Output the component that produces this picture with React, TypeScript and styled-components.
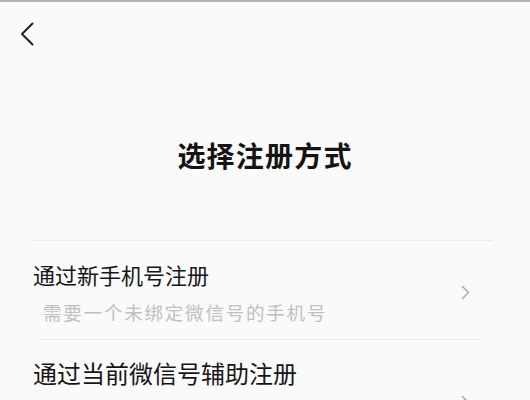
import styled, { createGlobalStyle } from "styled-components";

const GlobalStyle = createGlobalStyle`
  html, body {
    margin: 0;
    padding: 0;
    background: #fafafa;
    overflow: hidden;
  }
  body {
    font-family: "Noto Sans CJK SC", "Noto Sans", sans-serif;
  }
`;

const Page = styled.div`
  height: 398px;
  overflow: hidden;
  background: #fafafa;
  border-top: 2px solid #b4b4b4;
  display: flex;
  flex-direction: column;
`;

const NavBar = styled.div`
  height: 60px;
  padding: 19px 0 0 19px;
  box-sizing: border-box;
  flex-shrink: 0;
`;

const BackButton = styled.button`
  width: 16px;
  height: 26px;
  padding: 0;
  border: none;
  background: transparent;
  display: flex;
  align-items: center;
  justify-content: center;
  cursor: pointer;
`;

const Title = styled.h1`
  margin: 74px 0 0;
  font-size: 28px;
  font-weight: 700;
  line-height: 39px;
  letter-spacing: 1.2px;
  color: #141414;
  text-align: center;
  flex-shrink: 0;
`;

const Divider = styled.div<{ $left: number; $right: number }>`
  height: 1px;
  background: #ececec;
  margin: 0 ${(p) => p.$right}px 0 ${(p) => p.$left}px;
`;

const List = styled.div`
  margin-top: 65px;
  display: flex;
  flex-direction: column;
  flex-shrink: 0;
`;

const Item = styled.div<{ $top: number; $bottom: number; $minHeight?: number }>`
  display: flex;
  align-items: center;
  justify-content: space-between;
  padding: ${(p) => p.$top}px 23px ${(p) => p.$bottom}px 33px;
  margin-right: 37px;
  min-height: ${(p) => p.$minHeight ?? 0}px;
  cursor: pointer;
`;

const ItemText = styled.div`
  display: flex;
  flex-direction: column;
  align-self: flex-start;
`;

const ItemTitle = styled.div<{ $size: number }>`
  font-size: ${(p) => p.$size}px;
  font-weight: 400;
  line-height: ${(p) => Math.round(p.$size * 1.4)}px;
  color: #161616;
  white-space: nowrap;
`;

const ItemHint = styled.div`
  margin: 9px 0 0 10px;
  font-size: 18.5px;
  line-height: 26px;
  letter-spacing: 1.8px;
  color: #c0c0c0;
  white-space: nowrap;
`;

const Chevron = () => (
  <svg width="9" height="15" viewBox="0 0 9 15" fill="none">
    <path d="M1.5 1.5 L7.5 7.5 L1.5 13.5" stroke="#a9a9a9" strokeWidth="1.5" strokeLinecap="round" strokeLinejoin="round" />
  </svg>
);

const BackIcon = () => (
  <svg width="14" height="24" viewBox="0 0 14 24" fill="none">
    <path d="M12.5 1.5 L2 12 L12.5 22.5" stroke="#222" strokeWidth="2" strokeLinecap="round" strokeLinejoin="round" />
  </svg>
);

export default function App() {
  return (
    <>
      <GlobalStyle />
      <Page>
        <NavBar>
          <BackButton aria-label="返回">
            <BackIcon />
          </BackButton>
        </NavBar>
        <Title>选择注册方式</Title>
        <List>
          <Divider $left={32} $right={37} />
          <Item $top={18} $bottom={14}>
            <ItemText>
              <ItemTitle $size={22}>通过新手机号注册</ItemTitle>
              <ItemHint>需要一个未绑定微信号的手机号</ItemHint>
            </ItemText>
            <Chevron />
          </Item>
          <Divider $left={38} $right={49} />
          <Item $top={16} $bottom={0} $minHeight={92}>
            <ItemText>
              <ItemTitle $size={24}>通过当前微信号辅助注册</ItemTitle>
            </ItemText>
            <Chevron />
          </Item>
        </List>
      </Page>
    </>
  );
}
